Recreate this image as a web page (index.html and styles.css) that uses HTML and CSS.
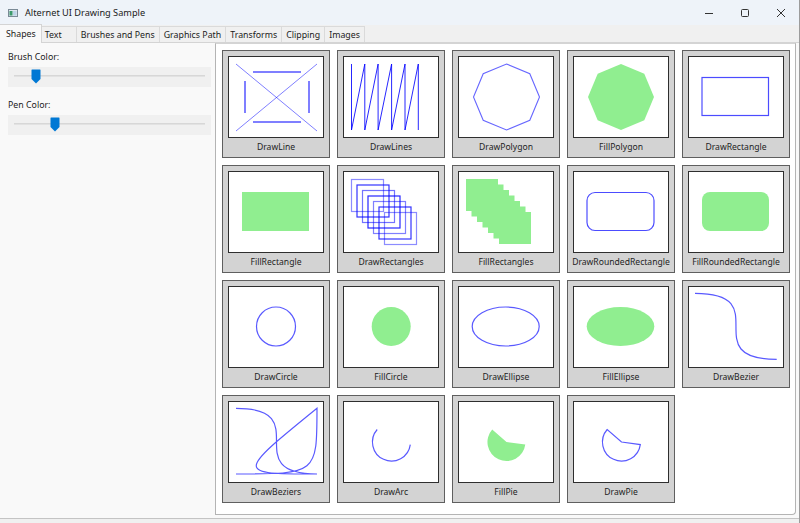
FILE: index.html
```html
<!DOCTYPE html>
<html>
<head>
<meta charset="utf-8">
<title>Alternet UI Drawing Sample</title>
<link rel="stylesheet" href="styles.css">
</head>
<body>
<div class="window">
  <div class="titlebar">
    <svg class="appicon" viewBox="0 0 10 8" width="10" height="8">
      <rect x="0.5" y="0.5" width="9" height="7" fill="#dfe7ee" stroke="#7a8a96"/>
      <rect x="1.5" y="2" width="3" height="4.5" fill="#3c9a6c"/>
      <rect x="5" y="2" width="3.5" height="4.5" fill="#bcd3e6"/>
    </svg>
    <span class="title">Alternet UI Drawing Sample</span>
    <div class="controls">
      <div class="ctl"><svg width="10" height="10" viewBox="0 0 10 10"><line x1="1" y1="5.5" x2="9" y2="5.5" stroke="#333" stroke-width="1"/></svg></div>
      <div class="ctl"><svg width="10" height="10" viewBox="0 0 10 10"><rect x="1.5" y="1.5" width="7" height="7" rx="1" fill="none" stroke="#333" stroke-width="1"/></svg></div>
      <div class="ctl"><svg width="10" height="10" viewBox="0 0 10 10"><path d="M1 1 L9 9 M9 1 L1 9" stroke="#333" stroke-width="1" fill="none"/></svg></div>
    </div>
  </div>
  <div class="tabs">
    <div class="tab active">Shapes</div>
    <div class="tab tab-wide">Text</div>
    <div class="tab">Brushes and Pens</div>
    <div class="tab">Graphics Path</div>
    <div class="tab">Transforms</div>
    <div class="tab">Clipping</div>
    <div class="tab">Images</div>
  </div>
  <div class="page">
    <div class="side">
      <div class="label">Brush Color:</div>
      <div class="slider">
        <div class="track"></div>
        <svg class="thumb" style="left:23px" width="10" height="15" viewBox="0 0 10 15"><path d="M1 0.5 H9 Q9.5 0.5 9.5 1 V10 L5 14.5 L0.5 10 V1 Q0.5 0.5 1 0.5 Z" fill="#0078d4"/></svg>
      </div>
      <div class="label label-second">Pen Color:</div>
      <div class="slider">
        <div class="track"></div>
        <svg class="thumb" style="left:42px" width="10" height="15" viewBox="0 0 10 15"><path d="M1 0.5 H9 Q9.5 0.5 9.5 1 V10 L5 14.5 L0.5 10 V1 Q0.5 0.5 1 0.5 Z" fill="#0078d4"/></svg>
      </div>
    </div>
    <div class="canvas">
      <div class="grid">
        <div class="card">
          <div class="frame"><svg viewBox="0 0 94 80" width="94" height="80">
            <g stroke="#0000ff" stroke-opacity="0.5" fill="none">
              <line x1="7" y1="7" x2="88" y2="74"/>
              <line x1="7" y1="74" x2="88" y2="7"/>
              <line x1="24" y1="15" x2="72" y2="15" stroke-width="2"/>
              <line x1="24" y1="65" x2="72" y2="65" stroke-width="2"/>
              <line x1="16" y1="24" x2="16" y2="56" stroke-width="2"/>
              <line x1="80" y1="24" x2="80" y2="56" stroke-width="2"/>
            </g>
          </svg></div>
          <div class="caption">DrawLine</div>
        </div>
        <div class="card">
          <div class="frame"><svg viewBox="0 0 94 80" width="94" height="80">
            <polyline points="7.5,7 7.5,73 20.8,7 20.8,73 34.1,7 34.1,73 47.6,7 47.6,73 61,7 61,73 74.3,7 74.3,73" fill="none" stroke="#0000ff" stroke-opacity="0.85"/>
          </svg></div>
          <div class="caption">DrawLines</div>
        </div>
        <div class="card">
          <div class="frame"><svg viewBox="0 0 94 80" width="94" height="80">
            <polygon points="47.5,7 70.8,16.7 80.5,40 70.8,63.3 47.5,73 24.2,63.3 14.5,40 24.2,16.7" fill="none" stroke="#0000ff" stroke-opacity="0.6" stroke-width="1.1"/>
          </svg></div>
          <div class="caption">DrawPolygon</div>
        </div>
        <div class="card">
          <div class="frame"><svg viewBox="0 0 94 80" width="94" height="80">
            <polygon points="47,7 70.3,16.7 80,40 70.3,63.3 47,73 23.7,63.3 14,40 23.7,16.7" fill="#90ee90"/>
          </svg></div>
          <div class="caption">FillPolygon</div>
        </div>
        <div class="card">
          <div class="frame"><svg viewBox="0 0 94 80" width="94" height="80">
            <rect x="13" y="20.5" width="66.5" height="38" fill="none" stroke="#0000ff" stroke-opacity="0.7" stroke-width="1.2"/>
          </svg></div>
          <div class="caption">DrawRectangle</div>
        </div>

        <div class="card">
          <div class="frame"><svg viewBox="0 0 94 80" width="94" height="80">
            <rect x="13" y="20" width="67" height="39" fill="#90ee90"/>
          </svg></div>
          <div class="caption">FillRectangle</div>
        </div>
        <div class="card">
          <div class="frame"><svg viewBox="0 0 94 80" width="94" height="80">
            <g fill="none" stroke="#0000ff" stroke-width="1.2">
              <rect x="7.5" y="7.5" width="32" height="32" stroke-opacity="0.45"/>
              <rect x="13" y="13" width="32" height="32" stroke-opacity="0.8"/>
              <rect x="18.5" y="18.5" width="32" height="32" stroke-opacity="0.55"/>
              <rect x="24" y="24" width="32" height="32" stroke-opacity="0.85"/>
              <rect x="29.5" y="29.5" width="32" height="32" stroke-opacity="0.5"/>
              <rect x="35" y="35" width="32" height="32" stroke-opacity="0.8"/>
              <rect x="40.5" y="40.5" width="32" height="32" stroke-opacity="0.45"/>
            </g>
          </svg></div>
          <div class="caption">DrawRectangles</div>
        </div>
        <div class="card">
          <div class="frame"><svg viewBox="0 0 94 80" width="94" height="80">
            <g fill="#90ee90">
              <rect x="7" y="7" width="32" height="32"/>
              <rect x="12.5" y="12.5" width="32" height="32"/>
              <rect x="18" y="18" width="32" height="32"/>
              <rect x="23.5" y="23.5" width="32" height="32"/>
              <rect x="29" y="29" width="32" height="32"/>
              <rect x="34.5" y="34.5" width="32" height="32"/>
              <rect x="40" y="40" width="32" height="32"/>
            </g>
          </svg></div>
          <div class="caption">FillRectangles</div>
        </div>
        <div class="card">
          <div class="frame"><svg viewBox="0 0 94 80" width="94" height="80">
            <rect x="13" y="20.5" width="67" height="38" rx="8" fill="none" stroke="#0000ff" stroke-opacity="0.7" stroke-width="1.2"/>
          </svg></div>
          <div class="caption">DrawRoundedRectangle</div>
        </div>
        <div class="card">
          <div class="frame"><svg viewBox="0 0 94 80" width="94" height="80">
            <rect x="13" y="20" width="67" height="39" rx="8" fill="#90ee90"/>
          </svg></div>
          <div class="caption">FillRoundedRectangle</div>
        </div>

        <div class="card">
          <div class="frame"><svg viewBox="0 0 94 80" width="94" height="80">
            <circle cx="47" cy="39.5" r="19.5" fill="none" stroke="#0000ff" stroke-opacity="0.65" stroke-width="1.2"/>
          </svg></div>
          <div class="caption">DrawCircle</div>
        </div>
        <div class="card">
          <div class="frame"><svg viewBox="0 0 94 80" width="94" height="80">
            <circle cx="47.2" cy="39.5" r="19.5" fill="#90ee90"/>
          </svg></div>
          <div class="caption">FillCircle</div>
        </div>
        <div class="card">
          <div class="frame"><svg viewBox="0 0 94 80" width="94" height="80">
            <ellipse cx="46.7" cy="39.5" rx="33.5" ry="19.5" fill="none" stroke="#0000ff" stroke-opacity="0.65" stroke-width="1.2"/>
          </svg></div>
          <div class="caption">DrawEllipse</div>
        </div>
        <div class="card">
          <div class="frame"><svg viewBox="0 0 94 80" width="94" height="80">
            <ellipse cx="46.5" cy="39.5" rx="33.8" ry="19.5" fill="#90ee90"/>
          </svg></div>
          <div class="caption">FillEllipse</div>
        </div>
        <div class="card">
          <div class="frame"><svg viewBox="0 0 94 80" width="94" height="80">
            <path d="M6 6.3 C88 6.3 6 72.3 87.7 72.3" fill="none" stroke="#0000ff" stroke-opacity="0.65" stroke-width="1.2"/>
          </svg></div>
          <div class="caption">DrawBezier</div>
        </div>

        <div class="card">
          <div class="frame"><svg viewBox="0 0 94 80" width="94" height="80">
            <path d="M7 6.3 C88 6.3 7 72 88 72 C7 72 7 72 88 6.3 C88 72 88 72 7 72" fill="none" stroke="#0000ff" stroke-opacity="0.65" stroke-width="1.2"/>
          </svg></div>
          <div class="caption">DrawBeziers</div>
        </div>
        <div class="card">
          <div class="frame"><svg viewBox="0 0 94 80" width="94" height="80">
            <path d="M66.3 42.6 A19 19 0 1 1 33.2 27.5" fill="none" stroke="#0000ff" stroke-opacity="0.65" stroke-width="1.2"/>
          </svg></div>
          <div class="caption">DrawArc</div>
        </div>
        <div class="card">
          <div class="frame"><svg viewBox="0 0 94 80" width="94" height="80">
            <path d="M47.5 40 L66.3 42.6 A19 19 0 1 1 33.2 27.5 Z" fill="#90ee90"/>
          </svg></div>
          <div class="caption">FillPie</div>
        </div>
        <div class="card">
          <div class="frame"><svg viewBox="0 0 94 80" width="94" height="80">
            <path d="M47.5 40 L66.3 42.6 A19 19 0 1 1 33.2 27.5 Z" fill="none" stroke="#0000ff" stroke-opacity="0.65" stroke-width="1.2"/>
          </svg></div>
          <div class="caption">DrawPie</div>
        </div>
      </div>
    </div>
  </div>
</div>
</body>
</html>
```

FILE: styles.css
```css
* { box-sizing: border-box; }
html, body { margin: 0; padding: 0; }
body {
  width: 800px;
  height: 523px;
  overflow: hidden;
  background: #f0f0f0;
  font-family: "Noto Sans", "Open Sans", sans-serif;
  font-size: 8.8px;
  color: #1b1b1b;
}
.window {
  width: 800px;
  height: 523px;
  display: flex;
  flex-direction: column;
  background: #f0f0f0;
  border-right: 1px solid #9c9c9c;
}
.titlebar {
  height: 25px;
  flex: none;
  background: #eef3f9;
  display: flex;
  align-items: center;
  padding-left: 8px;
}
.appicon { flex: none; margin-right: 7px; }
.title { font-size: 9.2px; color: #1a1a1a; }
.controls { margin-left: auto; display: flex; align-self: stretch; }
.ctl {
  width: 36px;
  display: flex;
  align-items: center;
  justify-content: center;
}
.tabs {
  height: 18px;
  flex: none;
  display: flex;
  align-items: flex-end;
  border-bottom: 1px solid #d4d4d4;
  background: #f0f0f0;
}
.tab {
  height: 16px;
  line-height: 16px;
  padding: 0 4px;
  border: 1px solid #dadada;
  border-bottom: none;
  margin-left: -1px;
  background: #f0f0f0;
  white-space: nowrap;
}
.tab.active {
  height: 19px;
  line-height: 19px;
  margin-left: 0;
  margin-bottom: -1px;
  padding: 0 5px 0 6px;
  background: #f9f9f9;
  border-color: #d4d4d4;
  border-left: none;
  position: relative;
  z-index: 1;
}
.tab-wide { min-width: 36px; padding-left: 3px; }
.page {
  flex: none;
  height: 476px;
  display: flex;
  background: #f9f9f9;
  border-bottom: 1px solid #c4c4c4;
}
.side {
  width: 213px;
  flex: none;
  padding: 7px 2px 0 8px;
}
.label { height: 14px; line-height: 14px; margin-bottom: 3px; }
.label-second { margin-top: 11px; }
.slider {
  height: 20px;
  background: #f0f0f0;
  position: relative;
  padding: 8px 6px 0 6px;
}
.track {
  height: 2px;
  background: #d7d7d7;
  border-bottom: 1px solid #e2e2e2;
}
.thumb { position: absolute; top: 2px; }
.canvas {
  width: 581px;
  height: 472px;
  margin-left: 2px;
  background: #fff;
  border: 1px solid #b4b4b4;
  border-top-color: #d4d4d4;
  border-radius: 0 0 4px 0;
  padding: 6px;
}
.grid {
  display: grid;
  grid-template-columns: repeat(5, 108px);
  grid-auto-rows: 108px;
  gap: 7px;
}
.card {
  width: 108px;
  height: 108px;
  background: #d3d3d3;
  border: 1px solid #5f5f5f;
  padding: 5px 5px 0 5px;
  display: flex;
  flex-direction: column;
}
.frame {
  width: 96px;
  height: 82px;
  flex: none;
  background: #fff;
  border: 1px solid #2e2e2e;
}
.frame svg { display: block; }
.caption {
  flex: 1;
  display: flex;
  align-items: center;
  justify-content: center;
  white-space: nowrap;
  color: #1e1e1e;
  padding-bottom: 1px;
  font-size: 8.6px;
}
```
